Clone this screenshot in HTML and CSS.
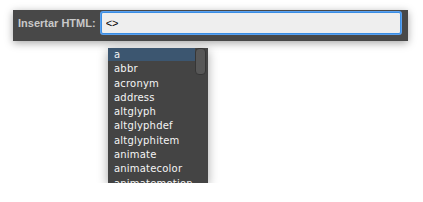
FILE: index.html
```html
<!DOCTYPE html>
<html lang="es">
<head>
    <meta charset="UTF-8">
    <title>Insertar HTML</title>
    <link rel="stylesheet" href="styles.css">
</head>
<body>
    <div class="panel">
        <label class="label" for="html">Insertar HTML:</label>
        <input class="field" id="html" type="text" value="<>">
    </div>

    <div class="dropdown">
        <ul class="tags">
            <li class="tag active">a</li>
            <li class="tag">abbr</li>
            <li class="tag">acronym</li>
            <li class="tag">address</li>
            <li class="tag">altglyph</li>
            <li class="tag">altglyphdef</li>
            <li class="tag">altglyphitem</li>
            <li class="tag">animate</li>
            <li class="tag">animatecolor</li>
            <li class="tag">animatemotion</li>
        </ul>
        <div class="track">
            <div class="thumb"></div>
        </div>
    </div>
</body>
</html>
```

FILE: styles.css
```css
* {
    margin: 0;
    padding: 0;
    box-sizing: border-box;
}

body {
    background-color: #ffffff;
    font-family: 'Liberation Sans', Arial, sans-serif;
}

.panel {
    width: 395px;
    height: 31px;
    margin: 10px 0 0 13px;
    padding: 2px 0 0 5px;
    display: flex;
    align-items: flex-start;
    gap: 5px;
    background-color: #484848;
    box-shadow: 0 2px 8px rgba(0,0,0,0.35);
}

.label {
    height: 22px;
    line-height: 22px;
    font-size: 11px;
    font-weight: bold;
    color: #c9c9c9;
}

.field {
    width: 300px;
    height: 22px;
    padding: 0 0 0 4px;
    border: 1px solid #3a8de3;
    border-radius: 2px;
    box-shadow: 0 0 0 1px #5aa0ee;
    background-color: #eeeeee;
    font-family: 'Liberation Sans', Arial, sans-serif;
    font-size: 11px;
    color: #000000;
    outline: none;
}

.dropdown {
    width: 100px;
    height: 135px;
    margin: 7px 0 0 108px;
    display: flex;
    overflow: hidden;
    background-color: #444444;
    box-shadow: 0 3px 10px rgba(0,0,0,0.35);
}

.tags {
    list-style: none;
    width: 87px;
}

.tag {
    height: 14.3px;
    line-height: 13.6px;
    padding-left: 6px;
    font-family: 'DejaVu Sans', Verdana, sans-serif;
    font-size: 10px;
    letter-spacing: 0.2px;
    color: #f4f4f4;
    white-space: nowrap;
}

.tag.active {
    height: 13.3px;
    margin-bottom: 1px;
    background-color: #3c5670;
}

.track {
    width: 13px;
    padding: 0 2px 0 0;
}

.thumb {
    width: 11px;
    height: 27px;
    border: 1px solid #363636;
    border-radius: 4px;
    background-color: #575757;
}
```
